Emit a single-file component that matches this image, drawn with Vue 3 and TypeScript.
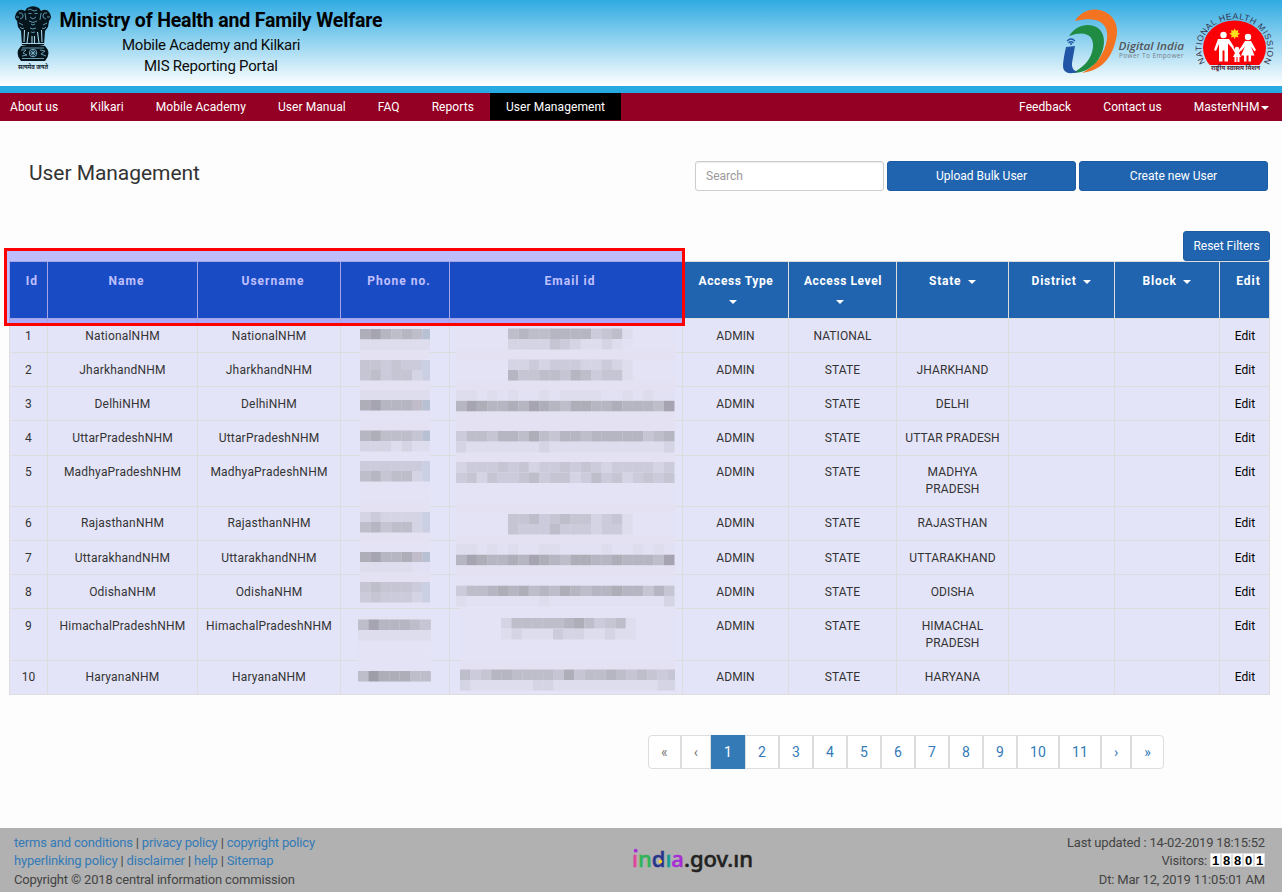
<script setup lang="ts">
interface NavItem { label: string; active?: boolean; caret?: boolean }
interface Column { label: string; width: number; filter?: boolean; wrap?: boolean }
interface UserRow { id: number; name: string; level: string; state: string; tall?: boolean }
interface Band { x: number; y: number; tones: string }

const leftNav: NavItem[] = [
  { label: 'About us' },
  { label: 'Kilkari' },
  { label: 'Mobile Academy' },
  { label: 'User Manual' },
  { label: 'FAQ' },
  { label: 'Reports' },
  { label: 'User Management', active: true },
]
const rightNav: NavItem[] = [{ label: 'Feedback' }, { label: 'Contact us' }, { label: 'MasterNHM', caret: true }]

const columns: Column[] = [
  { label: 'Id', width: 38 },
  { label: 'Name', width: 150 },
  { label: 'Username', width: 143 },
  { label: 'Phone no.', width: 109 },
  { label: 'Email id', width: 233 },
  { label: 'Access Type', width: 106, filter: true, wrap: true },
  { label: 'Access Level', width: 108, filter: true, wrap: true },
  { label: 'State', width: 112, filter: true },
  { label: 'District', width: 106, filter: true },
  { label: 'Block', width: 105, filter: true },
  { label: 'Edit', width: 50 },
]

const rows: UserRow[] = [
  { id: 1, name: 'NationalNHM', level: 'NATIONAL', state: '' },
  { id: 2, name: 'JharkhandNHM', level: 'STATE', state: 'JHARKHAND' },
  { id: 3, name: 'DelhiNHM', level: 'STATE', state: 'DELHI' },
  { id: 4, name: 'UttarPradeshNHM', level: 'STATE', state: 'UTTAR PRADESH' },
  { id: 5, name: 'MadhyaPradeshNHM', level: 'STATE', state: 'MADHYA PRADESH', tall: true },
  { id: 6, name: 'RajasthanNHM', level: 'STATE', state: 'RAJASTHAN' },
  { id: 7, name: 'UttarakhandNHM', level: 'STATE', state: 'UTTARAKHAND' },
  { id: 8, name: 'OdishaNHM', level: 'STATE', state: 'ODISHA' },
  { id: 9, name: 'HimachalPradeshNHM', level: 'STATE', state: 'HIMACHAL PRADESH', tall: true },
  { id: 10, name: 'HaryanaNHM', level: 'STATE', state: 'HARYANA' },
]

const cellsOf = (r: UserRow): string[] => [
  String(r.id), r.name, r.name, '', '', 'ADMIN', r.level, r.state, '', '', 'Edit',
]

/* Pixelated contact data: each character is the tone of one block. */
const palette: Record<string, string> = {
  '0': '#e1e1f3', '1': '#dddded', '2': '#d4d4e4', '3': '#cbcbdb', '4': '#c5c5d3',
  '5': '#bebecb', '6': '#b6b6c2', '7': '#aeaeb9', '8': '#a5a4b0', '9': '#9e9ea8',
  b: '#cacfe3', d: '#b8c0d4', p: '#c1bcc9',
}
const phoneBands: Band[] = [
  { x: 360, y: 329, tones: '786565d' }, { x: 360, y: 339.5, tones: '1111111' },
  { x: 360, y: 360, tones: '443433b' }, { x: 360, y: 370, tones: '453442b' },
  { x: 360, y: 390, tones: '1111111' }, { x: 360, y: 400, tones: '78666pd' },
  { x: 360, y: 430.5, tones: '675554d' }, { x: 360, y: 441, tones: '2221211' },
  { x: 360, y: 461, tones: '333333b' }, { x: 360, y: 471, tones: '564552b' },
  { x: 360, y: 512, tones: '232222b' }, { x: 360, y: 522, tones: '564552b' },
  { x: 360, y: 552, tones: '78667pd' }, { x: 360, y: 562, tones: '1111100' },
  { x: 360, y: 582, tones: '454443b' }, { x: 360, y: 592, tones: '343332b' },
  { x: 358, y: 619.5, tones: '5866654' }, { x: 358, y: 630, tones: '1111111' },
  { x: 358, y: 671, tones: '5977755' },
]
const emailBands: Band[] = [
  { x: 508, y: 328.5, tones: '565566663451' }, { x: 508, y: 339, tones: '222243211210' },
  { x: 508, y: 359.5, tones: '223233322321' }, { x: 508, y: 370, tones: '644554653441' },
  { x: 456, y: 390, tones: '110101001011110010100' }, { x: 456, y: 400.8, tones: '687667687657766766658' },
  { x: 456, y: 431, tones: '355466575466566666456' }, { x: 456, y: 442, tones: '211111112111111111112' },
  { x: 456, y: 462, tones: '233343423343432333323' }, { x: 456, y: 472.5, tones: '342433453442353423434' },
  { x: 508, y: 514, tones: '445345442341' }, { x: 508, y: 524, tones: '433353332331' },
  { x: 456, y: 544, tones: '110101001100001001010' }, { x: 456, y: 554.7, tones: '687667687657766766658' },
  { x: 456, y: 585.7, tones: '355676756576566766464' }, { x: 456, y: 596, tones: '100000001000000000002' },
  { x: 501, y: 618, tones: '2555556753451' }, { x: 501, y: 629, tones: '1211132211211' },
  { x: 460, y: 669.5, tones: '534665555474556545434' }, { x: 460, y: 680, tones: '211111122111111111122' },
]
const blocks = [phoneBands, emailBands].flatMap((list) =>
  list.flatMap((b) =>
    [...b.tones].map((t, i) => {
      const x = b.x + i * 10.4
      const limit = list === emailBands ? 675 : b.x === 358 ? 431 : 430
      return { x, y: b.y, w: Math.max(0, Math.min(10.5, limit - x)), fill: palette[t] }
    }),
  ),
)

const pages = ['«', '‹', '1', '2', '3', '4', '5', '6', '7', '8', '9', '10', '11', '›', '»']
const visitors = ['1', '8', '8', '0', '1']
</script>

<template>
  <div class="page">
    <header class="banner">
      <svg class="brand" width="400" height="86" viewBox="0 0 400 86">
        <g fill="#06151c">
          <path d="M27 8Q33 4.500 39 8L41 11Q46 8 49 12Q53 17 49 21L48 27L45 31L44 45H22L21 31L18 27L17 21Q13 17 17 12Q20 8 25 11z" />
          <path d="M21 46Q33 43 45 46Q52 53 45 61H21Q14 53 21 46z" />
        </g>
        <g fill="none" stroke="#6fb6d6" stroke-width=".8">
          <path d="M28 10q2-2 4 0t5 0M28.500 13.500h3m3 0h3M30 17l3 2 3-2M29 21q4 3 8 0M19 13q3-1 4 2t-3 4M47 13q-3-1-4 2t3 4M16 17h3m28 0h3M19 23l4 2M47 23l-4 2M25 13l1 7M41 13l-1 7" />
          <path d="M31 24q2 2 4 0M30 28q3 2 6 0M31 32q2 1 4 0M20 27q2 3 4 1M46 27q-2 3-4 1" />
        </g>
        <g fill="none" stroke="#a5d4e8" stroke-width="1.100">
          <path d="M24.500 30l-.5 12M28.500 32l-1.500 11M37.500 32l1.500 11M41.500 30l.5 12M32 36v8M34.500 36v8M22 43.500h22" />
        </g>
        <g fill="none" stroke="#7fb9d2" stroke-width=".8">
          <circle cx="33" cy="53" r="3.800" /><path d="M29 53h8M33 49v8M30.500 50.500l5 5M35.500 50.500l-5 5M21 50h5l-3 3 4 2-5 1M40 50l5 1-4 3 5 2M22 48h22M22 58.500h22" />
        </g>
        <text x="18" y="68.500" class="motto" textLength="30" lengthAdjust="spacingAndGlyphs">सत्यमेव जयते</text>
        <text x="59.500" y="27" class="ministry" textLength="323">Ministry of Health and Family Welfare</text>
        <text x="122" y="50" class="sub" textLength="178.500">Mobile Academy and Kilkari</text>
        <text x="144" y="71" class="sub" textLength="134">MIS Reporting Portal</text>
      </svg>
      <svg class="partners" width="242" height="86" viewBox="1040 0 242 86">
        <path fill="#f47321" d="M1075 21C1081 11 1092 7 1103 11C1116 16 1120 29 1115 43C1111 58 1102 70 1082 73C1096 66 1105 53 1107 39C1109 25 1100 15 1075 21z" />
        <path fill="#1f8b43" d="M1069 36C1076 25 1089 22 1098 28C1107 35 1105 50 1098 60C1091 69 1083 73 1072 73C1083 68 1092 59 1093 47C1094 35 1085 30 1069 36z" />
        <path fill="#2156a6" d="M1066 47l9-1-3 17q-1 7 6 9-15 4-15-6 0-6 3-19z" />
        <g fill="none" stroke="#2156a6" stroke-width="1.200"><path d="M1067 41q4-4 8 0M1068.500 43q2.500-2.500 5 0" /></g>
        <circle cx="1071" cy="44" r="1" fill="#2156a6" />
        <text x="1118.500" y="49.500" class="digital" textLength="65.500" lengthAdjust="spacingAndGlyphs">Digital India</text>
        <text x="1119" y="58" class="power" textLength="64.500">Power To Empower</text>
        <defs><path id="mission-arc" d="M1206 63.500A33 29.500 0 1 1 1263 63.500" /><clipPath id="dome"><path d="M1195 0h87v65h-87z" /></clipPath></defs>
        <ellipse cx="1234.500" cy="48" rx="31.500" ry="27.500" fill="#fb0006" clip-path="url(#dome)" />
        <text class="mission"><textPath href="#mission-arc" startOffset="1" textLength="127">NATIONAL HEALTH MISSION</textPath></text>
        <g fill="#fff">
          <circle cx="1223.500" cy="35" r="3.200" /><circle cx="1248" cy="37" r="3.200" /><circle cx="1237" cy="49" r="2.300" />
          <path d="M1218 39h11l5 8-1.500 1.500-4.500-5v18h-3.500v-11h-2v11H1219V44l-3 7-2-1z" />
          <path d="M1245 41h6l5 9-1.500 1.500-3.500-5 3.500 9h-3.500v6h-2.500v-6h-2v6h-2.500v-6H1241l4-9-4 4.500-1.500-1.500z" />
          <path d="M1233 47l3 4h2l3-3 1 1-3 4 2 4h-1.500v5h-2v-5h-1v5h-2v-5H1233l2-4-3-5z" />
        </g>
        <path fill="#ffe01a" d="M1234.700 28.500l1.200 2.300 2.600-.8-.8 2.600 2.300 1.200-2.300 1.200.8 2.600-2.600-.8-1.200 2.300-1.200-2.300-2.600.8.8-2.600-2.300-1.200 2.300-1.200-.8-2.600 2.600.8z" />
        <text x="1211" y="70" class="hindi" textLength="49" lengthAdjust="spacingAndGlyphs">राष्ट्रीय स्वास्थ्य मिशन</text>
      </svg>
    </header>
    <nav class="nav">
      <a v-for="n in leftNav" :key="n.label" :class="{ active: n.active }">{{ n.label }}</a>
      <span class="grow"></span>
      <a v-for="n in rightNav" :key="n.label">{{ n.label }}<i v-if="n.caret" class="caret near"></i></a>
    </nav>

    <main>
      <div class="toolbar">
        <h1>User Management</h1>
        <input type="text" placeholder="Search" />
        <button>Upload Bulk User</button>
        <button>Create new User</button>
      </div>
      <div class="reset-row"><button class="reset">Reset Filters</button></div>
      <div class="table">
        <div class="tr head">
          <div v-for="c in columns" :key="c.label" class="th" :class="{ plain: !c.filter, wrap: c.wrap }" :style="{ width: c.width + 'px' }">
            {{ c.label }} <i v-if="c.filter" class="caret"></i>
          </div>
        </div>
        <div v-for="r in rows" :key="r.id" class="tr" :class="{ tall: r.tall }">
          <div v-for="(c, i) in cellsOf(r)" :key="i" class="td" :class="{ name: i === 1 || i === 2, edit: i === 10 }" :style="{ width: columns[i].width + 'px' }">{{ c }}</div>
        </div>
        <svg class="mosaic" width="330" height="376" viewBox="350 319 330 376">
          <path fill="#e3e3f5" d="M360 328h70v279h-70zM358 616h73v67h-73zM456 328h219v279H456zM460 608h215v84H460z" />
          <path fill="#e4e1f2" d="M360 349h70v10h-70zM360 381h70v9h-70zM360 420h70v10h-70zM360 500h70v11h-70zM360 533h70v8h-70zM360 573h70v9h-70zM456 349h219v10H456zM456 380h219v10H456zM456 412h219v19H456zM456 453h219v9H456zM456 503h219v10H456zM456 535h219v9H456zM456 566h219v10H456zM460 660h215v9H460z" />
          <rect v-for="(b, i) in blocks" :key="i" :x="b.x" :y="b.y" :width="b.w" height="10.500" :fill="b.fill" />
        </svg>
        <div class="marker"></div>
      </div>
      <div class="pagination">
        <a v-for="(p, i) in pages" :key="p" :class="{ current: p === '1', off: i < 2 }">{{ p }}</a>
      </div>
    </main>

    <footer>
      <div class="legal">
        <p><a>terms and conditions</a> | <a>privacy policy</a> | <a>copyright policy</a></p>
        <p><a>hyperlinking policy</a> | <a>disclaimer</a> | <a>help</a> | <a>Sitemap</a></p>
        <p>Copyright © 2018 central information commission</p>
      </div>
      <svg class="gov" width="132" height="46" viewBox="626 836 132 46">
        <text x="632" y="867" class="india" textLength="121" lengthAdjust="spacingAndGlyphs"><tspan class="c1">ı</tspan><tspan class="c2">n</tspan><tspan class="c3">d</tspan><tspan class="c4">ı</tspan><tspan class="c5">a</tspan><tspan class="c6">.gov.ın</tspan></text>
        <circle cx="635.700" cy="850.700" r="1.900" fill="#a72bd6" /><circle cx="660.500" cy="861.500" r="1.700" fill="#ffd21c" />
      </svg>
      <div class="status">
        <p>Last updated : 14-02-2019 18:15:52</p>
        <p>Visitors: <span class="counter"><b v-for="(v, i) in visitors" :key="i">{{ v }}</b></span></p>
        <p>Dt: Mar 12, 2019 11:05:01 AM</p>
      </div>
    </footer>
  </div>
</template>

<style>
body { margin: 0; background: #fdfdfd; overflow: hidden; }
</style>
<style scoped>
* { box-sizing: border-box; }
.page { width: 1282px; height: 892px; display: flex; flex-direction: column; font: 12px/17.14px Roboto, "Noto Sans", sans-serif; color: #333; }
.banner { height: 93px; flex: none; display: flex; justify-content: space-between; border-bottom: 7px solid #27a9e1; background: linear-gradient(#2fabe2, #fff); background-clip: padding-box; background-origin: padding-box; }
svg text { font-family: Roboto, "Noto Sans", sans-serif; letter-spacing: 0; }
svg .ministry { font-size: 19.500px; font-weight: 700; fill: #000; }
svg .sub { font-size: 15px; fill: #0b0b0b; }
svg .motto { font-size: 6px; font-weight: 700; fill: #10242c; }
svg .digital { font: italic 600 11.500px "Open Sans", sans-serif; fill: #55565a; }
svg .power { font: 6.500px "Open Sans", sans-serif; fill: #77808a; }
svg .mission { font: 8.500px "Liberation Sans", sans-serif; fill: #33334d; }
svg .hindi { font-size: 6.500px; font-weight: 700; fill: #4b2b35; }
.nav { height: 28px; flex: none; display: flex; background: #930024; letter-spacing: .07px; }
.nav a { height: 27px; padding: 6px 16px 0; color: #fff; white-space: nowrap; }
.nav a:first-child { padding-left: 10px; }
.nav a:last-child { padding-right: 13px; }
.nav .active { background: #000; }
.grow { flex: 1; }
.caret { display: inline-block; margin-left: 3px; vertical-align: middle; border: 4px solid transparent; border-top-color: currentColor; border-bottom: 0; }
.caret.near { margin-left: 1.500px; }
main { flex: 1; padding: 40px 12px 0 9px; }
.toolbar { display: flex; gap: 3px; padding-right: 2px; height: 30px; }
h1 { flex: 1; margin: -1px 0 0 20px; font-size: 21px; line-height: 26px; font-weight: 400; letter-spacing: -.05px; }
input, button { width: 189px; height: 30px; border-radius: 3px; font: inherit; }
input { border: 1px solid #ccc; padding: 0 10px; background: #fff; box-shadow: inset 0 1px 1px rgba(0, 0, 0, .075); }
input::placeholder { color: #999; }
button { border: 1px solid #1d5ba3; background: #2064b0; color: #fff; padding: 1px 0 0; }
.reset-row { display: flex; justify-content: flex-end; margin-top: 40px; }
.reset { width: 87px; }
.table { position: relative; width: 1261px; border: 1px solid #ddd; border-bottom: 0; }
.tr { display: flex; height: 34.150px; background: #e4e4f8; border-bottom: 1px solid #ddd; text-align: center; }
.tall { height: 51.300px; }
.head { height: 57px; background: #2064b0; color: #fff; font-weight: 700; letter-spacing: 1px; line-height: 20px; }
.th { flex: none; padding: 9px 8px 0; border-right: 1px solid #ddd; letter-spacing: .75px; }
.th.plain { padding-left: 15px; padding-right: 7px; white-space: nowrap; letter-spacing: 1px; }
.th.plain:first-child, .th.plain:last-child { padding-left: 14px; }
.th.wrap { padding-left: 9px; letter-spacing: .6px; }
.th.wrap .caret { margin: 0 6px 0 0; }
.td { flex: none; padding: 8.550px 7px 0; border-right: 1px solid #ddd; letter-spacing: .1px; }
.td.name { letter-spacing: .2px; }
.th:last-child, .td:last-child { border-right: 0; }
.edit { color: #000; }
.mosaic { position: absolute; left: 340px; top: 57px; }
.marker { position: absolute; left: -6px; top: -14px; width: 681px; height: 78px; border: 3px solid #f00; background: rgba(0, 0, 255, .25); }
.pagination { display: flex; margin: 40px 0 0 639px; height: 34px; font-size: 14px; line-height: 20px; letter-spacing: .12px; }
.pagination a { padding: 6px 12px; border: 1px solid #ddd; color: #337ab7; background: #fff; }
.pagination a:first-child { border-radius: 4px 0 0 4px; }
.pagination a:last-child { border-radius: 0 4px 4px 0; }
.pagination .off { color: #777; }
.pagination .current { color: #fff; background: #337ab7; border-color: #337ab7; }
footer { height: 64px; flex: none; background: #b1b1b1; padding: 5.500px 17px 0 14px; display: flex; justify-content: space-between; font-size: 13px; line-height: 18.500px; letter-spacing: -.18px; color: #444; position: relative; }
footer p { margin: 0; height: 18.500px; }
footer a { color: #337ab7; }
.gov { position: absolute; left: 626px; top: 8px; }
svg .india { font: 500 21.500px "Noto Sans", sans-serif; stroke-width: .5; }
.c1 { fill: #e0459a; stroke: #e0459a; }
.c2 { fill: #2fb457; stroke: #2fb457; }
.c3 { fill: #27348b; stroke: #27348b; }
.c4 { fill: #149c94; stroke: #149c94; }
.c5 { fill: #a72bd6; stroke: #a72bd6; }
.c6 { fill: #222; stroke: #222; }
.status { text-align: right; }
.counter { display: inline-flex; vertical-align: middle; height: 14px; margin: -2px 0 2px 0; }
.counter b { width: 11px; background: #fff; border: 1px solid #ddd; color: #000; font: 700 13px/13px "Liberation Sans", sans-serif; text-align: center; letter-spacing: 0; }
</style>
